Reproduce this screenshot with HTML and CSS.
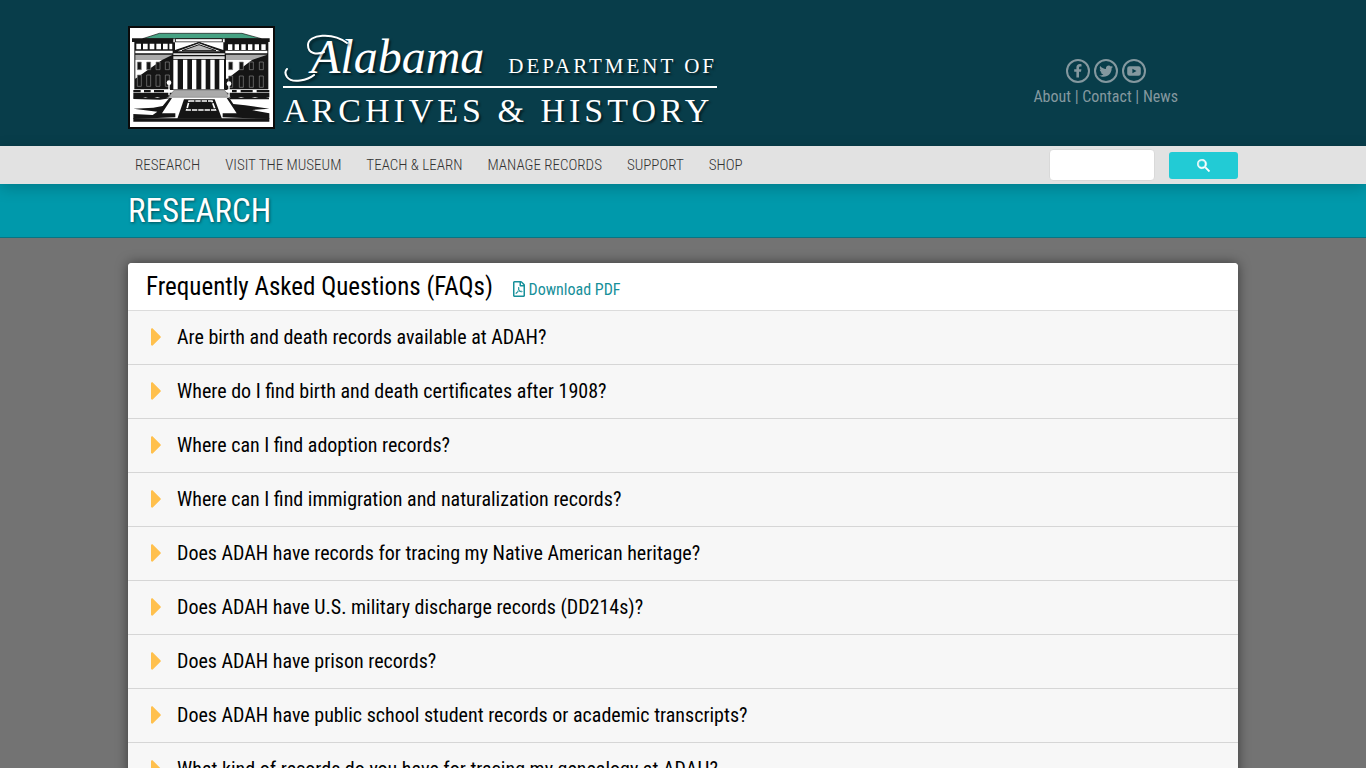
FILE: index.html
```html
<!DOCTYPE html>
<html lang="en">

<head>
    <meta charset="UTF-8" />
    <meta name="viewport" content="width=device-width, initial-scale=1" />
    <title>Research - Alabama Department of Archives &amp; History</title>
    <link rel="stylesheet" href="styles.css">
</head>

<body>
    <header>
        <div class="container masthead">
            <a href="#" class="logo">
                <svg class="emblem" viewBox="24 24 441 309" aria-hidden="true">
                    <rect x="24" y="24" width="441" height="309" fill="#0a0a0a" />
                    <rect x="30" y="30" width="429" height="297" fill="#fff" />
                    <!-- roof -->
                    <path d="M68 62L118 46H366L424 62Z" fill="#46a283" stroke="#111" stroke-width="2" />
                    <!-- wings -->
                    <path d="M36 61H160V72H36ZM314 61H449V72H314ZM43 72H160V216H43ZM314 72H445V216H314Z" fill="#151515" />
                    <path d="M46 98H160V106H46ZM314 98H442V106H314Z" fill="#fff" />
                    <path d="M46 110H158L126 126H46ZM318 110H442L396 126H318Z" fill="#aaa" />
                    <path d="M46 126H126L46 182ZM318 126H396L322 182H318Z" fill="#fff" />
                    <g fill="#fff">
                        <path d="M49 77h14v17H49zM69 77h14v17H69zM89 77h14v17H89zM109 77h14v17h-14zM129 77h14v17h-14zM148 77h9v17h-9z" />
                        <path d="M324 79h13v17h-13zM344 79h13v17h-13zM364 79h13v17h-13zM384 79h13v17h-13zM404 79h13v17h-13zM424 79h13v17h-13z" />
                    </g>
                    <g fill="#151515" stroke="#888" stroke-width="2">
                        <path d="M52 132h12v23H52zM80 132h12v23H80zM108 132h12v23h-12zM136 132h12v23h-12z" />
                        <path d="M52 171h12v34H52zM80 171h12v34H80zM108 171h12v34h-12zM136 171h12v34h-12z" />
                        <path d="M326 132h12v23h-12zM358 132h12v23h-12zM388 132h12v23h-12zM418 132h12v23h-12z" />
                        <path d="M326 174h12v34h-12zM358 174h12v34h-12zM388 174h12v34h-12zM418 174h12v34h-12z" />
                    </g>
                    <!-- portico -->
                    <path d="M166 62H307V72H166Z" fill="#fff" stroke="#151515" stroke-width="3" />
                    <path d="M158 73H316V215H158Z" fill="#151515" />
                    <path d="M165 73H310V96L237 72L165 96Z" fill="#fff" />
                    <path d="M162 102L237 74L312 102Z" fill="#fff" stroke="#151515" stroke-width="4" />
                    <path d="M186 98L237 80L288 98Z" fill="#bbb" stroke="#151515" stroke-width="3" />
                    <path d="M160 106H314V111H160ZM160 115H314V123H160Z" fill="#ddd" />
                    <path d="M160 125h13v89h-13zM189 125h13v89h-13zM216 125h13v89h-13zM244 125h13v89h-13zM271 125h13v89h-13zM298 125h14v89h-14z" fill="#fff" />
                    <!-- steps and lawn -->
                    <path d="M40 214H150V224H40ZM322 214H448V224H322Z" fill="#fff" />
                    <path d="M40 216H62V223H40ZM72 216H92V223H72ZM102 216H132V223H102ZM336 216H350V223H336ZM362 216H398V223H362ZM410 216H448V223H410Z" fill="#151515" />
                    <path d="M40 224H448V238H40Z" fill="#151515" />
                    <path d="M40 237L58 233L76 239L94 234L112 240L130 234L150 241L120 245L40 243ZM325 238L345 234L363 240L384 234L405 240L426 234L447 239V244H330Z" fill="#151515" />
                    <path d="M163 216H313L331 238H145Z" fill="#aaa" stroke="#777" stroke-width="2" />
                    <path d="M148 239L118 300H178L196 250H284L306 300H356L328 239Z" fill="#fff" />
                    <path d="M148 240L156 240L126 286L166 286V298L40 303V288L98 291L112 281L40 272L100 269L128 264ZM328 240H320L350 286H308V298L448 303V286L396 276L448 272L376 262L340 258Z" fill="#151515" />
                    <path d="M192 244H284L306 302H172Z" fill="#151515" />
                    <path d="M207 249H276L286 276H200Z" fill="#151515" stroke="#fff" stroke-width="5" stroke-dasharray="16 3" />
                    <path d="M40 301H448V311H40Z" fill="#151515" />
                    <path d="M147 199V232M327 202V236" stroke="#fff" stroke-width="4" />
                    <circle cx="147" cy="194" r="7" fill="#fff" />
                    <circle cx="327" cy="197" r="7" fill="#fff" />
                </svg>
                <span class="logo-text">
                    <svg class="flourish" viewBox="0 0 72 60" aria-hidden="true">
                        <path d="M31 49C25 54 9 58 4 51C2 48 2 45 4 43" />
                        <path d="M64 17C50 6 25 8 25 19C25 28 34 29 41 26" />
                    </svg>
                    <span class="logo-top">
                        <span class="script">Alabama</span>
                        <span class="dept">DEPARTMENT OF</span>
                    </span>
                    <span class="logo-bottom">ARCHIVES &amp; HISTORY</span>
                </span>
            </a>

            <div class="contact">
                <div class="social">
                    <a href="#" aria-label="Facebook">
                        <svg viewBox="0 0 24 24">
                            <circle cx="12" cy="12" r="11" />
                            <path class="solid" d="M10.4 18.5V12.8H8.2V10.3H10.4V8.5C10.4 6.3 11.7 5.1 13.7 5.1C14.6 5.1 15.5 5.3 15.5 5.3V7.5H14.4C13.3 7.5 13 8.1 13 8.8V10.3H15.4L15 12.8H13V18.5Z" />
                        </svg>
                    </a>
                    <a href="#" aria-label="Twitter">
                        <svg viewBox="0 0 24 24">
                            <circle cx="12" cy="12" r="11" />
                            <path class="solid" transform="translate(5.2 5.2) scale(.027)" d="M459.37 151.716c.325 4.548.325 9.097.325 13.645 0 138.72-105.583 298.558-298.558 298.558-59.452 0-114.68-17.219-161.137-47.106 8.447.974 16.568 1.299 25.34 1.299 49.055 0 94.213-16.568 130.274-44.832-46.132-.975-84.792-31.188-98.112-72.772 6.498.974 12.995 1.624 19.818 1.624 9.421 0 18.843-1.3 27.614-3.573-48.081-9.747-84.143-51.98-84.143-102.985v-1.299c13.969 7.797 30.214 12.67 47.431 13.319-28.264-18.843-46.781-51.005-46.781-87.391 0-19.492 5.197-37.36 14.294-52.954 51.655 63.675 129.3 105.258 216.365 109.807-1.624-7.797-2.599-15.918-2.599-24.04 0-57.828 46.782-104.934 104.934-104.934 30.213 0 57.502 12.67 76.67 33.137 23.715-4.548 46.456-13.32 66.599-25.34-7.798 24.366-24.366 44.833-46.132 57.827 21.117-2.273 41.584-8.122 60.426-16.243-14.292 20.791-32.161 39.308-52.628 54.253z" />
                        </svg>
                    </a>
                    <a href="#" aria-label="YouTube">
                        <svg viewBox="0 0 24 24">
                            <circle cx="12" cy="12" r="11" />
                            <path class="solid" fill-rule="evenodd" d="M7.5 7.3H16.5Q18.8 7.3 18.8 9.6V14.4Q18.8 16.7 16.5 16.7H7.5Q5.2 16.7 5.2 14.4V9.6Q5.2 7.3 7.5 7.3ZM10.4 9.7V14.3L14.5 12Z" />
                        </svg>
                    </a>
                </div>
                <div class="links"><a href="#">About</a> | <a href="#">Contact</a> | <a href="#">News</a></div>
            </div>
        </div>
    </header>

    <nav>
        <div class="container navbar">
            <ul class="menu">
                <li><a href="#">RESEARCH</a></li>
                <li><a href="#">VISIT THE MUSEUM</a></li>
                <li><a href="#">TEACH &amp; LEARN</a></li>
                <li><a href="#">MANAGE RECORDS</a></li>
                <li><a href="#">SUPPORT</a></li>
                <li><a href="#">SHOP</a></li>
            </ul>
            <form class="search">
                <input type="text" name="q" aria-label="Search" />
                <button type="submit" aria-label="Search">
                    <svg viewBox="0 0 13 13">
                        <path d="M9.3 8.2h-.6l-.2-.2a4.7 4.7 0 1 0-.5.5l.2.2v.6l3.6 3.6 1.1-1.1zM4.8 8.2a3.3 3.3 0 1 1 0-6.6 3.3 3.3 0 0 1 0 6.6z" />
                    </svg>
                </button>
            </form>
        </div>
    </nav>

    <div class="page-title">
        <div class="container">
            <h1>RESEARCH</h1>
        </div>
    </div>

    <main class="container">
        <div class="card">
            <div class="card-header">
                <h2>Frequently Asked Questions (FAQs)</h2>
                <a href="#" class="download">
                    <svg viewBox="0 0 384 512" aria-hidden="true">
                        <path d="M369.9 97.9L286 14C277 5 264.8-.1 252.1-.1H48C21.5 0 0 21.5 0 48v416c0 26.5 21.5 48 48 48h288c26.5 0 48-21.5 48-48V131.9c0-12.7-5.1-25-14.1-34zM332.1 128H256V51.9l76.1 76.1zM48 464V48h160v104c0 13.3 10.7 24 24 24h104v288H48zm250.2-143.7c-12.2-12-47-8.7-64.4-6.5-17.2-10.5-28.7-25-36.8-46.3 3.9-16.1 10.1-40.6 5.4-56-4.2-26.2-37.8-23.6-42.6-5.9-4.4 16.1-.4 38.5 7 67.1-10 23.9-24.9 56-35.4 74.4-20 10.3-47 26.2-51 46.2-3.3 15.8 26 55.2 76.1-31.2 22.4-7.4 46.8-16.5 68.4-20.1 18.9 10.2 41 17 55.8 17 25.5 0 28-28.2 17.5-38.7zm-198.1 77.8c5.1-13.7 24.5-29.5 30.4-35-19 30.3-30.4 35.7-30.4 35zm81.6-190.6c7.4 0 6.7 32.1 1.8 40.8-4.4-13.9-4.3-40.8-1.8-40.8zm-24.4 136.6c9.7-16.9 18-37 24.7-54.7 8.3 15.1 18.9 27.2 30.1 35.5-20.8 4.3-38.9 13.1-54.8 19.2zm131.6-5s-5 6-37.3-7.8c35.1-2.6 40.9 5.4 37.3 7.8z" />
                    </svg>
                    Download PDF
                </a>
            </div>
            <details><summary>Are birth and death records available at ADAH?</summary></details>
            <details><summary>Where do I find birth and death certificates after 1908?</summary></details>
            <details><summary>Where can I find adoption records?</summary></details>
            <details><summary>Where can I find immigration and naturalization records?</summary></details>
            <details><summary>Does ADAH have records for tracing my Native American heritage?</summary></details>
            <details><summary>Does ADAH have U.S. military discharge records (DD214s)?</summary></details>
            <details><summary>Does ADAH have prison records?</summary></details>
            <details><summary>Does ADAH have public school student records or academic transcripts?</summary></details>
            <details><summary>What kind of records do you have for tracing my genealogy at ADAH?</summary></details>
        </div>
    </main>

    <script>
        const caret = `<svg class="caret" viewBox="0 106 172 300" aria-hidden="true"><path d="M0 384.662V127.338c0-17.818 21.543-26.741 34.142-14.142l128.656 128.656c7.81 7.81 7.81 20.474 0 28.284L34.142 398.804C21.543 411.404 0 402.481 0 384.662z" /></svg>`;

        document.querySelectorAll("summary").forEach((summary) => {
            summary.insertAdjacentHTML("afterbegin", caret);
        });
    </script>
</body>

</html>
```

FILE: styles.css
```css
* {
    box-sizing: border-box;
    margin: 0;
    padding: 0;
}

body {
    font-family: 'Roboto Condensed', 'Liberation Sans Narrow', Roboto, sans-serif;
    font-size: 16px;
    line-height: 24px;
    background-color: #737373;
    color: #000;
}

a {
    color: inherit;
    text-decoration: none;
}

.container {
    width: 100%;
    max-width: 1140px;
    margin: 0 auto;
    padding: 0 15px;
}

header {
    background-color: #083d4a;
}

.masthead {
    display: flex;
    justify-content: space-between;
    align-items: center;
    padding-top: 26px;
    padding-bottom: 12px;
}

.logo {
    display: flex;
    gap: 8px;
    color: #fff;
    font-family: 'Liberation Serif', serif;
    text-shadow: 2px 2px 2px rgba(0, 0, 0, 0.5);
}

.emblem {
    width: 147px;
    height: 103px;
}

.logo-text {
    position: relative;
    display: flex;
    flex-direction: column;
    min-width: 434px;
}

.flourish {
    position: absolute;
    top: 0;
    left: 0;
    width: 72px;
    height: 60px;
    fill: none;
    stroke: #fff;
    stroke-width: 2;
    stroke-linecap: round;
    filter: drop-shadow(2px 2px 1px rgba(0, 0, 0, 0.5));
}

.logo-top {
    display: flex;
    align-items: baseline;
    justify-content: space-between;
    height: 62px;
    padding-left: 28px;
    border-bottom: 2px solid #fff;
}

.script {
    font-size: 48px;
    font-style: italic;
    line-height: 62px;
}

.dept {
    font-size: 21px;
    letter-spacing: 3px;
}

.logo-bottom {
    font-size: 34px;
    line-height: 46px;
    letter-spacing: 4px;
}

.contact {
    margin-right: 60px;
    padding-top: 7px;
    color: #84989f;
    text-align: center;
}

.social {
    display: flex;
    justify-content: center;
    gap: 4px;
}

.social svg {
    display: block;
    width: 24px;
    height: 24px;
    fill: none;
    stroke: #84989f;
    stroke-width: 2;
}

.social .solid {
    fill: #84989f;
    stroke: none;
}

.links {
    margin-top: 2px;
}

nav {
    position: relative;
    background-color: #e2e2e2;
    box-shadow: 0 4px 16px rgba(0, 0, 0, 0.2);
}

.navbar {
    display: flex;
    justify-content: space-between;
    align-items: center;
    height: 38px;
}

.menu {
    display: flex;
    gap: 25px;
    padding-left: 7px;
    list-style: none;
    font-size: 15px;
    font-weight: 300;
    color: #333;
}

.search {
    display: flex;
    align-items: center;
    gap: 14px;
}

.search input {
    width: 106px;
    height: 32px;
    padding: 0 8px;
    border: 1px solid #d9d9d9;
    border-radius: 4px;
    background-color: #fff;
}

.search button {
    width: 69px;
    height: 27px;
    border: none;
    border-radius: 3px;
    background-color: #22cbd5;
    cursor: pointer;
}

.search svg {
    display: block;
    width: 13px;
    height: 13px;
    margin: 0 auto;
    fill: #fff;
    stroke: #fff;
    stroke-width: 0.5;
}

.page-title {
    background-color: #0099ab;
    border-bottom: 1px solid #087483;
}

h1 {
    font-size: 33px;
    font-weight: 400;
    line-height: 53px;
    color: #fff;
    text-shadow: 1px 1px 3px rgba(0, 0, 0, 0.5);
}

.card {
    margin: 25px 0;
    border-radius: 4px;
    background-color: #f7f7f7;
    box-shadow: 0 0 12px rgba(0, 0, 0, 0.5);
    overflow: hidden;
}

.card-header {
    display: flex;
    align-items: baseline;
    gap: 20px;
    height: 48px;
    padding: 0 18px;
    border-bottom: 1px solid #dcdcdc;
    background-color: #fff;
}

h2 {
    font-size: 25px;
    font-weight: 400;
    line-height: 48px;
}

.download {
    color: #17909a;
}

.download svg {
    width: 12px;
    height: 16px;
    fill: #17909a;
    vertical-align: -2px;
}

details {
    border-bottom: 1px solid #d6d6d6;
}

summary {
    display: flex;
    align-items: center;
    gap: 16px;
    padding: 14px 23px 15px;
    font-size: 20px;
    list-style: none;
    cursor: pointer;
}

.caret {
    width: 10px;
    height: 18px;
    fill: #ffc04d;
}
```
